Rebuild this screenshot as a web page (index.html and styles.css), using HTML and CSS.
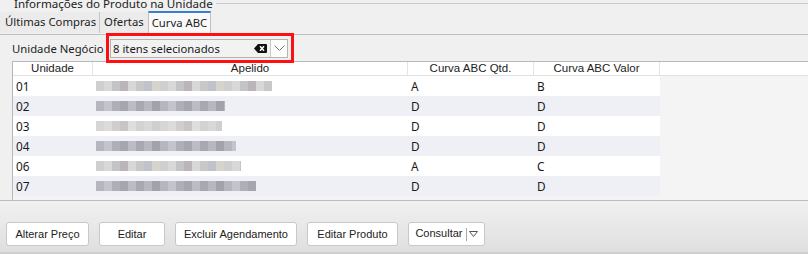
FILE: index.html
```html
<!DOCTYPE html>
<html lang="pt-BR">
<head>
  <meta charset="UTF-8">
  <title>Curva ABC</title>
  <link rel="stylesheet" href="styles.css">
</head>
<body>
  <div class="panel">
    <div class="group-title">
      <span>Informações do Produto na Unidade</span>
      <div class="group-line"></div>
    </div>

    <div class="tabs">
      <div class="tab">Últimas Compras</div>
      <div class="tab">Ofertas</div>
      <div class="tab active">Curva ABC</div>
      <div class="tab-fill"></div>
    </div>

    <div class="tab-body">
      <div class="filter-row">
        <label class="filter-label">Unidade Negócio</label>
        <div class="combo">
          <div class="combo-input">
            <span>8 itens selecionados</span>
            <svg class="clear-icon" width="13" height="9" viewBox="0 0 13 9">
              <path d="M4 0 H12 a1 1 0 0 1 1 1 V8 a1 1 0 0 1 -1 1 H4 L0 4.5 Z" fill="#111"/>
              <path d="M6 2.2 L10 6.8 M10 2.2 L6 6.8" stroke="#fff" stroke-width="1.5"/>
            </svg>
          </div>
          <div class="combo-btn">
            <svg width="11" height="6" viewBox="0 0 11 6">
              <path d="M0.5 0.5 L5.5 5.5 L10.5 0.5" fill="none" stroke="#777" stroke-width="1"/>
            </svg>
          </div>
          <div class="highlight"></div>
        </div>
      </div>

      <div class="grid">
        <div class="grid-head">
          <div class="col c-unid">Unidade</div>
          <div class="col c-apel">Apelido</div>
          <div class="col c-qtd">Curva ABC Qtd.</div>
          <div class="col c-val">Curva ABC Valor</div>
        </div>
        <div class="grid-row">
          <div class="cell c-unid">01</div>
          <div class="cell c-apel"><span class="blur" style="width:176px"></span></div>
          <div class="cell c-qtd">A</div>
          <div class="cell c-val">B</div>
        </div>
        <div class="grid-row odd">
          <div class="cell c-unid">02</div>
          <div class="cell c-apel"><span class="blur dark" style="width:129px"></span></div>
          <div class="cell c-qtd">D</div>
          <div class="cell c-val">D</div>
        </div>
        <div class="grid-row">
          <div class="cell c-unid">03</div>
          <div class="cell c-apel"><span class="blur light" style="width:126px"></span></div>
          <div class="cell c-qtd">D</div>
          <div class="cell c-val">D</div>
        </div>
        <div class="grid-row odd">
          <div class="cell c-unid">04</div>
          <div class="cell c-apel"><span class="blur dark" style="width:140px"></span></div>
          <div class="cell c-qtd">D</div>
          <div class="cell c-val">D</div>
        </div>
        <div class="grid-row">
          <div class="cell c-unid">06</div>
          <div class="cell c-apel"><span class="blur" style="width:145px"></span></div>
          <div class="cell c-qtd">A</div>
          <div class="cell c-val">C</div>
        </div>
        <div class="grid-row odd">
          <div class="cell c-unid">07</div>
          <div class="cell c-apel"><span class="blur dark" style="width:160px"></span></div>
          <div class="cell c-qtd">D</div>
          <div class="cell c-val">D</div>
        </div>
      </div>
    </div>
  </div>

  <div class="toolbar">
    <button class="btn w-alterar">Alterar Preço</button>
    <button class="btn w-editar">Editar</button>
    <button class="btn w-excluir">Excluir Agendamento</button>
    <button class="btn w-produto">Editar Produto</button>
    <button class="btn w-consultar">Consultar <span class="split">
      <svg width="9" height="6" viewBox="0 0 9 6"><path d="M0.5 0.5 H8.5 L4.5 5.5 Z" fill="none" stroke="#555" stroke-width="1"/></svg>
    </span></button>
  </div>
</body>
</html>
```

FILE: styles.css
```css
body {
  margin: 0;
  background-color: #f0f0f0;
  font-family: 'Noto Sans', 'DejaVu Sans', sans-serif;
  font-size: 11.3px;
  color: #1a1a1a;
  overflow: hidden;
}

.panel {
  height: 200px;
  padding-top: 1px;
  box-sizing: border-box;
  overflow: hidden;
}

.group-title {
  display: flex;
  align-items: center;
  height: 9px;
  padding-left: 14px;
  margin-top: -2px;
  font-size: 11.6px;
  line-height: 9px;
  color: #222;
}

.group-line {
  flex: 1;
  height: 0;
  border-top: 1px solid #c8c8c8;
  margin-left: 3px;
}

.tabs {
  display: flex;
  height: 23px;
  margin-top: 3px;
  border-bottom: 1px solid #c0c0c0;
}

.tab {
  padding: 0 4px;
  line-height: 20px;
  height: 21px;
  margin-top: 1px;
  background-color: #ebebeb;
  color: #222;
}

.tab:first-child {
  padding: 0 3px 0 5px;
}

.tab + .tab {
  border-left: 1px solid #c4c4c4;
}

.tab.active {
  margin-top: 0;
  line-height: 20px;
  height: 23px;
  box-sizing: border-box;
  padding: 0 3px;
  background-color: #f9f9f9;
  border-top: 2px solid #3b80cf;
  border-left: 1px solid #c0c0c0;
  border-right: 1px solid #c0c0c0;
}

.tab-fill {
  flex: 1;
}

.tab-body {
  padding-left: 12px;
}

.filter-row {
  display: flex;
  align-items: center;
  height: 26px;
}

.filter-label {
  width: 98px;
  flex-shrink: 0;
  white-space: nowrap;
  color: #222;
}

.combo {
  position: relative;
  display: flex;
  width: 176px;
  height: 17px;
  border: 1px solid #b4b4b4;
  background-color: #f2f2f2;
}

.highlight {
  position: absolute;
  left: -5px;
  top: -7px;
  width: 182px;
  height: 24px;
  border: 3px solid #ff1010;
}

.combo-input {
  flex: 1;
  display: flex;
  align-items: center;
  padding-left: 2px;
  padding-right: 3px;
  white-space: nowrap;
}

.combo-input span {
  flex: 1;
}

.clear-icon {
  display: block;
}

.combo-btn {
  width: 16px;
  border-left: 1px solid #c8c8c8;
  background-color: #fff;
  display: flex;
  align-items: center;
  justify-content: center;
}

.grid {
  height: 138px;
  border-top: 1px solid #b8b8b8;
  border-left: 1px solid #b8b8b8;
  background-color: #f4f4f4;
}

.grid-head {
  display: flex;
  height: 13px;
  background-color: #fff;
  border-bottom: 1px solid #e0e0e0;
  font-family: 'Liberation Sans', Arial, sans-serif;
  font-size: 11.5px;
  line-height: 13px;
  color: #222;
}

.col {
  text-align: center;
  border-right: 1px solid #e4e4e4;
  box-sizing: border-box;
}

.c-unid { width: 80px; }
.c-apel { width: 315px; }
.c-qtd { width: 126px; }
.c-val { width: 126px; }

.grid-row {
  display: flex;
  height: 20px;
  line-height: 20px;
  font-size: 11.8px;
}

.grid-row .cell {
  background-color: #fff;
  padding-left: 3px;
  box-sizing: border-box;
  display: flex;
  align-items: center;
}

.grid-row.odd .cell {
  background-color: #eef0f5;
}

.blur {
  display: inline-block;
  height: 10px;
  background-image: repeating-linear-gradient(90deg,
    #cfcfd2 0 8px, #d8d8d6 8px 16px, #c4c4c8 16px 24px, #b9b5b8 24px 32px,
    #d6d8d8 32px 40px, #c8c8c8 40px 48px, #bfc2c6 48px 56px, #d5d4cf 56px 64px);
}

.blur.dark {
  background-image: repeating-linear-gradient(90deg,
    #b6b6c0 0 8px, #c4c4cc 8px 16px, #b0aeb8 16px 24px, #a6a6ae 24px 32px,
    #bcbcc6 32px 40px, #a9a8b0 40px 48px, #b8b6be 48px 56px, #a2a2aa 56px 64px);
}

.blur.light {
  background-image: repeating-linear-gradient(90deg,
    #d7d5d5 0 8px, #dcdcdc 8px 16px, #cfcdcd 16px 24px, #c9c5c5 24px 32px,
    #dedede 32px 40px, #d2d2d2 40px 48px, #d8d8d8 48px 56px, #cfcfcf 56px 64px);
}

.toolbar {
  display: flex;
  gap: 10px;
  height: 54px;
  padding: 21px 0 0 6px;
  box-sizing: border-box;
  background: linear-gradient(#f1f1f1, #dfdfdf);
  border-top: 1px solid #bdbdbd;
  border-bottom: 2px solid #cfcfcf;
}

.btn {
  height: 24px;
  background-color: #fff;
  border: 1px solid #c8c8c8;
  border-radius: 3px;
  font-family: 'Liberation Sans', Arial, sans-serif;
  font-size: 11px;
  color: #222;
  padding: 0;
}

.w-alterar { width: 83px; }
.w-editar { width: 66px; }
.w-excluir { width: 122px; }
.w-produto { width: 91px; }
.w-consultar { width: 77px; }

.split {
  display: inline-flex;
  align-items: center;
  border-left: 1px solid #aaa;
  padding-left: 2px;
  height: 13px;
  vertical-align: middle;
}
```
